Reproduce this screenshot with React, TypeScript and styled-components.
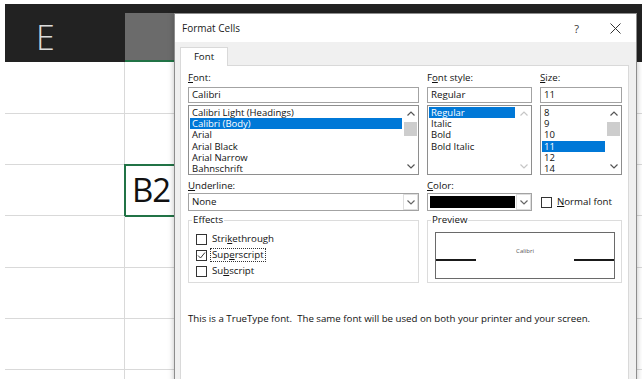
import React from "react";
import styled, { createGlobalStyle } from "styled-components";

const UI_FONT = `"Open Sans", "Noto Sans", "Liberation Sans", sans-serif`;

const GlobalStyle = createGlobalStyle`
  html, body { margin: 0; padding: 0; background: #fff; }
  body { font-family: ${UI_FONT}; }
`;

const Page = styled.div`
  position: relative;
  width: 642px;
  height: 379px;
  overflow: hidden;
  box-sizing: border-box;
  padding: 4px 0 0 5px;
  background: #fff;
`;

/* ---------- spreadsheet ---------- */
const Sheet = styled.div`
  display: flex;
  flex-direction: column;
`;

const HeaderBar = styled.div`
  display: flex;
  height: 58px;
  background: #222222;
`;

const ColHeader = styled.div<{ $active?: boolean }>`
  box-sizing: border-box;
  width: ${(p) => (p.$active ? 140 : 120)}px;
  display: flex;
  align-items: flex-start;
  font-family: "Open Sans", "Noto Sans", sans-serif;
  font-weight: 300;
  font-size: 34px;
  line-height: 1;
  color: #dcdcdc;
  padding: 16px 0 0 31px;
  ${(p) =>
    p.$active &&
    `margin-top: 9px;
     background: #6b6b6b;
     border-bottom: 2px solid #217346;`}
`;

const GridRow = styled.div<{ $h: number }>`
  display: flex;
  box-sizing: border-box;
  height: ${(p) => p.$h}px;
  border-bottom: 1px solid #d9d9d9;
`;

const ECell = styled.div`
  box-sizing: border-box;
  width: 120px;
  border-right: 1px solid #d9d9d9;
`;

const BCell = styled.div<{ $selected?: boolean }>`
  box-sizing: border-box;
  width: 70px;
  display: flex;
  align-items: center;
  font-family: "Open Sans", "Noto Sans", sans-serif;
  font-size: 33px;
  letter-spacing: -1px;
  color: #111;
  ${(p) =>
    p.$selected &&
    `border: 2px solid #217346;
     margin: -1px 0 -2px -1px;
     height: calc(100% + 3px);
     padding: 0 0 2px 6px;`}
`;

/* ---------- dialog ---------- */
const Dialog = styled.div`
  position: absolute;
  left: 174px;
  top: 13px;
  width: 463px;
  height: 380px;
  box-sizing: border-box;
  border: 1px solid #8d8d8d;
  background: #f0f0f0;
  box-shadow: 0 0 6px rgba(0, 0, 0, 0.25);
  display: flex;
  flex-direction: column;
  font-family: ${UI_FONT};
  font-size: 9.7px;
  color: #111;
`;

const TitleBar = styled.div`
  height: 28px;
  flex: none;
  background: #fff;
  display: flex;
  align-items: center;
  padding: 0 15px 0 7px;
`;

const TitleText = styled.div`
  flex: 1;
  font-size: 10px;
  color: #1a1a1a;
`;

const TitleButton = styled.div<{ $gap?: number }>`
  display: flex;
  align-items: center;
  justify-content: center;
  font-size: 11px;
  color: #333;
  margin-right: ${(p) => p.$gap ?? 0}px;
`;

const Body = styled.div`
  flex: 1;
  display: flex;
  flex-direction: column;
  padding: 5px 7px 0 5px;
`;

const TabStrip = styled.div`
  display: flex;
  height: 19px;
`;

const Tab = styled.div`
  position: relative;
  z-index: 1;
  width: 48px;
  height: 19px;
  box-sizing: border-box;
  border: 1px solid #d9d9d9;
  border-bottom: none;
  background: #fff;
  display: flex;
  align-items: center;
  justify-content: center;
  padding-bottom: 1px;
`;

const Panel = styled.div`
  flex: 1;
  margin-top: -1px;
  background: #fff;
  border: 1px solid #d9d9d9;
  padding: 6px 5px 0 7px;
`;

const FormGrid = styled.div`
  display: grid;
  grid-template-columns: 231px 105px 82px;
  column-gap: 8px;
  align-items: start;
`;

const Field = styled.div<{ $top?: number }>`
  display: flex;
  flex-direction: column;
  margin-top: ${(p) => p.$top ?? 0}px;
`;

const Label = styled.div<{ $mb?: number }>`
  line-height: 12px;
  height: 12px;
  margin-bottom: ${(p) => p.$mb ?? 3}px;
  white-space: nowrap;
`;

const TextBox = styled.div`
  height: 16px;
  box-sizing: border-box;
  border: 1px solid #a3a3a3;
  padding: 0 3px;
  line-height: 14px;
  white-space: nowrap;
`;

const ListBox = styled.div`
  margin-top: 2px;
  height: 70px;
  box-sizing: border-box;
  border: 1px solid #8e8e8e;
  display: flex;
  overflow: hidden;
`;

const Items = styled.div`
  flex: 1;
  padding: 1px 1px 0 1px;
`;

const Item = styled.div<{ $sel?: boolean }>`
  height: 11.2px;
  line-height: 11.2px;
  font-size: 9.5px;
  padding: 0 2px;
  white-space: nowrap;
  background: ${(p) => (p.$sel ? "#0078d7" : "transparent")};
  color: ${(p) => (p.$sel ? "#fff" : "#111")};
`;

const ScrollBar = styled.div`
  width: 15px;
  flex: none;
  display: flex;
  flex-direction: column;
  background: #fff;
`;

const ScrollArrow = styled.div`
  height: 15px;
  display: flex;
  align-items: center;
  justify-content: center;
`;

const Thumb = styled.div`
  height: 14px;
  margin: 1px 1px 0 1px;
  background: #cdcdcd;
`;

const Spacer = styled.div`
  flex: 1;
`;

const SelectBox = styled.div`
  height: 18px;
  box-sizing: border-box;
  border: 1px solid #a3a3a3;
  display: flex;
  align-items: stretch;
`;

const SelectText = styled.div`
  flex: 1;
  padding-left: 3px;
  line-height: 16px;
`;

const Swatch = styled.div`
  flex: 1;
  margin: 2px 1px 2px 2px;
  background: #000;
`;

const DropButton = styled.div`
  width: 15px;
  box-sizing: border-box;
  border: 1px solid #dedede;
  display: flex;
  align-items: center;
  justify-content: center;
  background: #fff;
`;

const CheckCell = styled.div`
  align-self: end;
  height: 18px;
  display: flex;
  align-items: center;
  padding-left: 1px;
`;

const CheckRow = styled.div`
  height: 16px;
  display: flex;
  align-items: center;
  gap: 4px;
  white-space: nowrap;
`;

const Box = styled.div`
  width: 11px;
  height: 11px;
  box-sizing: border-box;
  border: 1px solid #333;
  background: #fff;
  display: flex;
  align-items: center;
  justify-content: center;
`;

const CheckLabel = styled.span<{ $focus?: boolean }>`
  line-height: 12px;
  padding: 0 1px;
  margin-left: -1px;
  border: 1px dotted ${(p) => (p.$focus ? "#333" : "transparent")};
`;

const Group = styled.fieldset<{ $span?: number }>`
  grid-column: span ${(p) => p.$span ?? 1};
  margin: 3px 0 0 0;
  padding: 0 3px 3px 3px;
  border: 1px solid #dcdcdc;
  min-width: 0;
  height: 69px;
  box-sizing: border-box;
`;

const Legend = styled.legend`
  padding: 0 1px;
  line-height: 12px;
  font-size: 9.7px;
`;

const CheckList = styled.div`
  margin: 5px 0 0 4px;
  display: flex;
  flex-direction: column;
`;

const PreviewBox = styled.div`
  margin: 6px 3px 0 4px;
  height: 47px;
  box-sizing: border-box;
  border: 1px solid #6a6a6a;
  display: grid;
  grid-template-columns: 40px 1fr 40px;
  align-items: start;
`;

const BaseLine = styled.div`
  margin-top: 26px;
  height: 2px;
  background: #1a1a1a;
`;

const Sample = styled.div`
  margin-top: 14px;
  text-align: center;
  font-size: 6px;
  line-height: 8px;
  color: #555;
`;

const Note = styled.div`
  grid-column: 1 / -1;
  margin-top: 30px;
  line-height: 12px;
  white-space: pre;
`;

const Chevron = ({ up, color = "#555" }: { up?: boolean; color?: string }) => (
  <svg width="8" height="5" viewBox="0 0 8 5">
    <polyline
      points={up ? "0.5,4.5 4,1 7.5,4.5" : "0.5,0.5 4,4 7.5,0.5"}
      fill="none"
      stroke={color}
      strokeWidth="1.2"
    />
  </svg>
);

const Close = () => (
  <svg width="11" height="11" viewBox="0 0 11 11">
    <path d="M0.5 0.5 L10.5 10.5 M10.5 0.5 L0.5 10.5" stroke="#333" strokeWidth="1" />
  </svg>
);

const Tick = () => (
  <svg width="9" height="9" viewBox="0 0 9 9">
    <polyline points="1,4.5 3.5,7 8,1.5" fill="none" stroke="#333" strokeWidth="1" />
  </svg>
);

const Scroll = ({ thumb, disabled }: { thumb?: boolean; disabled?: boolean }) => {
  const c = disabled ? "#c6c6c6" : "#555";
  return (
    <ScrollBar>
      <ScrollArrow>
        <Chevron up color={c} />
      </ScrollArrow>
      {thumb && <Thumb />}
      <Spacer />
      <ScrollArrow>
        <Chevron color={c} />
      </ScrollArrow>
    </ScrollBar>
  );
};

const Check = ({
  checked,
  focus,
  children,
}: {
  checked?: boolean;
  focus?: boolean;
  children: React.ReactNode;
}) => (
  <CheckRow>
    <Box>{checked && <Tick />}</Box>
    <CheckLabel $focus={focus}>{children}</CheckLabel>
  </CheckRow>
);

const rows = [52, 51, 51, 52, 51, 51, 30];

export default function App() {
  return (
    <>
      <GlobalStyle />
      <Page>
        <Sheet>
          <HeaderBar>
            <ColHeader>E</ColHeader>
            <ColHeader $active />
          </HeaderBar>
          {rows.map((h, i) => (
            <GridRow key={i} $h={h}>
              <ECell />
              <BCell $selected={i === 2}>{i === 2 ? "B2" : null}</BCell>
            </GridRow>
          ))}
        </Sheet>

        <Dialog>
          <TitleBar>
            <TitleText>Format Cells</TitleText>
            <TitleButton $gap={31}>?</TitleButton>
            <TitleButton>
              <Close />
            </TitleButton>
          </TitleBar>
          <Body>
            <TabStrip>
              <Tab>Font</Tab>
            </TabStrip>
            <Panel>
              <FormGrid>
                <Field>
                  <Label>
                    <u>F</u>ont:
                  </Label>
                  <TextBox>Calibri</TextBox>
                  <ListBox>
                    <Items>
                      <Item>Calibri Light (Headings)</Item>
                      <Item $sel>Calibri (Body)</Item>
                      <Item>Arial</Item>
                      <Item>Arial Black</Item>
                      <Item>Arial Narrow</Item>
                      <Item>Bahnschrift</Item>
                    </Items>
                    <Scroll thumb />
                  </ListBox>
                </Field>
                <Field>
                  <Label>
                    F<u>o</u>nt style:
                  </Label>
                  <TextBox>Regular</TextBox>
                  <ListBox>
                    <Items>
                      <Item $sel>Regular</Item>
                      <Item>Italic</Item>
                      <Item>Bold</Item>
                      <Item>Bold Italic</Item>
                    </Items>
                    <Scroll disabled />
                  </ListBox>
                </Field>
                <Field>
                  <Label>
                    <u>S</u>ize:
                  </Label>
                  <TextBox>11</TextBox>
                  <ListBox>
                    <Items>
                      <Item>8</Item>
                      <Item>9</Item>
                      <Item>10</Item>
                      <Item $sel>11</Item>
                      <Item>12</Item>
                      <Item>14</Item>
                    </Items>
                    <Scroll thumb />
                  </ListBox>
                </Field>

                <Field $top={5}>
                  <Label $mb={1}>
                    <u>U</u>nderline:
                  </Label>
                  <SelectBox>
                    <SelectText>None</SelectText>
                    <DropButton>
                      <Chevron color="#666" />
                    </DropButton>
                  </SelectBox>
                </Field>
                <Field $top={5}>
                  <Label $mb={1}>
                    <u>C</u>olor:
                  </Label>
                  <SelectBox>
                    <Swatch />
                    <DropButton>
                      <Chevron color="#666" />
                    </DropButton>
                  </SelectBox>
                </Field>
                <CheckCell>
                  <Check>
                    <u>N</u>ormal font
                  </Check>
                </CheckCell>

                <Group>
                  <Legend>Effects</Legend>
                  <CheckList>
                    <Check>
                      Stri<u>k</u>ethrough
                    </Check>
                    <Check checked focus>
                      Sup<u>e</u>rscript
                    </Check>
                    <Check>
                      Su<u>b</u>script
                    </Check>
                  </CheckList>
                </Group>
                <Group $span={2}>
                  <Legend>Preview</Legend>
                  <PreviewBox>
                    <BaseLine />
                    <Sample>Calibri</Sample>
                    <BaseLine />
                  </PreviewBox>
                </Group>

                <Note>
                  {"This is a TrueType font.  The same font will be used on both your printer and your screen."}
                </Note>
              </FormGrid>
            </Panel>
          </Body>
        </Dialog>
      </Page>
    </>
  );
}
